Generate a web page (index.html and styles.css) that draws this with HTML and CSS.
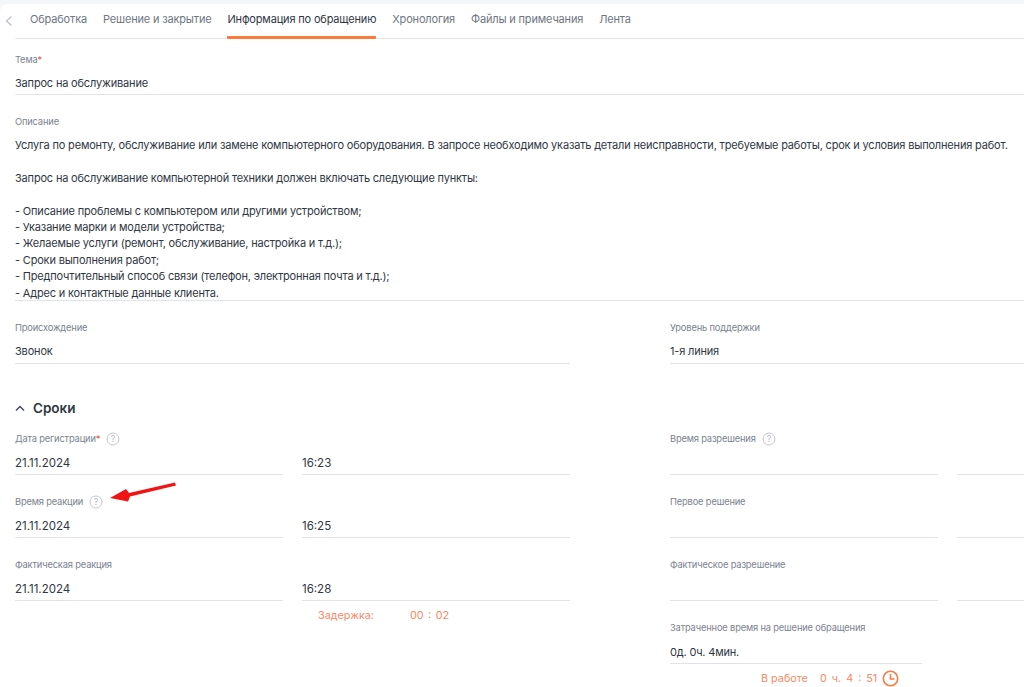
FILE: index.html
```html
<!DOCTYPE html>
<html lang="ru">
<head>
  <meta charset="UTF-8" />
  <meta name="viewport" content="width=device-width, initial-scale=1.0" />
  <title>Информация по обращению</title>
  <link rel="stylesheet" href="styles.css">
</head>
<body>
  <div class="card">
    <!-- вкладки -->
    <div class="tabs-row">
      <svg class="tabs-back" width="8" height="10" viewBox="0 0 8 10"><path d="M6.5 .5 L1.5 5 L6.5 9.5" fill="none" stroke="#c0c3ca" stroke-width="1.4"/></svg>
      <div class="tabs">
        <a class="tab">Обработка</a>
        <a class="tab">Решение и закрытие</a>
        <a class="tab active">Информация по обращению</a>
        <a class="tab">Хронология</a>
        <a class="tab">Файлы и примечания</a>
        <a class="tab">Лента</a>
      </div>
    </div>

    <div class="field field-topic">
      <div class="label">Тема<span class="req">*</span></div>
      <div class="value">Запрос на обслуживание</div>
    </div>

    <div class="field field-desc">
      <div class="label">Описание</div>
      <div class="value desc">
        <p>Услуга по ремонту, обслуживание или замене компьютерного оборудования. В запросе необходимо указать детали неисправности, требуемые работы, срок и условия выполнения работ.</p>
        <p>Запрос на обслуживание компьютерной техники должен включать следующие пункты:</p>
        <p>- Описание проблемы с компьютером или другими устройством;<br>
        - Указание марки и модели устройства;<br>
        - Желаемые услуги (ремонт, обслуживание, настройка и т.д.);<br>
        - Сроки выполнения работ;<br>
        - Предпочтительный способ связи (телефон, электронная почта и т.д.);<br>
        - Адрес и контактные данные клиента.</p>
      </div>
    </div>

    <div class="columns columns-origin">
      <div class="field">
        <div class="label">Происхождение</div>
        <div class="value">Звонок</div>
      </div>
      <div class="field">
        <div class="label">Уровень поддержки</div>
        <div class="value">1-я линия</div>
      </div>
    </div>

    <div class="section-title">
      <svg width="10" height="7" viewBox="0 0 10 7"><path d="M1 5.5 L5 1.5 L9 5.5" fill="none" stroke="#3d4654" stroke-width="1.4"/></svg>
      <span>Сроки</span>
    </div>

    <div class="columns columns-terms">
      <div class="col">
        <div class="field">
          <div class="label">Дата регистрации<span class="req">*</span>
            <svg class="hint" width="14" height="14" viewBox="0 0 14 14"><circle cx="7" cy="7" r="6" fill="none" stroke="#c3c6cc"/><text x="7" y="10" text-anchor="middle">?</text></svg>
          </div>
          <div class="pair"><div class="value num">21.11.2024</div><div class="value num">16:23</div></div>
        </div>
        <div class="field field-marked">
          <div class="label">Время реакции
            <svg class="hint" width="14" height="14" viewBox="0 0 14 14"><circle cx="7" cy="7" r="6" fill="none" stroke="#c3c6cc"/><text x="7" y="10" text-anchor="middle">?</text></svg>
          </div>
          <svg class="arrow" width="70" height="24" viewBox="0 0 70 24"><path d="M67 1.5 L21 12 L18 8 L2 17 L20 20.5 L22 15.5 L68 4.5 Z" fill="#f01414"/></svg>
          <div class="pair"><div class="value num">21.11.2024</div><div class="value num">16:25</div></div>
        </div>
        <div class="field">
          <div class="label">Фактическая реакция</div>
          <div class="pair"><div class="value num">21.11.2024</div><div class="value num">16:28</div></div>
        </div>
        <div class="delay"><span>Задержка:</span><span class="delay-time">00 : 02</span></div>
      </div>

      <div class="col">
        <div class="field">
          <div class="label">Время разрешения
            <svg class="hint" width="14" height="14" viewBox="0 0 14 14"><circle cx="7" cy="7" r="6" fill="none" stroke="#c3c6cc"/><text x="7" y="10" text-anchor="middle">?</text></svg>
          </div>
          <div class="pair"><div class="value">&nbsp;</div><div class="value">&nbsp;</div></div>
        </div>
        <div class="field">
          <div class="label">Первое решение</div>
          <div class="pair"><div class="value">&nbsp;</div><div class="value">&nbsp;</div></div>
        </div>
        <div class="field">
          <div class="label">Фактическое разрешение</div>
          <div class="pair"><div class="value">&nbsp;</div><div class="value">&nbsp;</div></div>
        </div>
        <div class="field field-spent">
          <div class="label">Затраченное время на решение обращения</div>
          <div class="value">0д. 0ч. 4мин.</div>
        </div>
        <div class="timer">
          <span>В работе</span><span class="timer-time">0 ч. 4 : 51</span>
          <svg width="17" height="17" viewBox="0 0 17 17"><circle cx="8.5" cy="8.5" r="7.2" fill="none" stroke="#f87c45" stroke-width="1.6"/><path d="M8.5 4 V9 H12.5" fill="none" stroke="#f87c45" stroke-width="1.6"/></svg>
        </div>
      </div>
    </div>
  </div>
</body>
</html>
```

FILE: styles.css
```css
body {
  margin: 0;
  background-color: #f5f6fa;
  font-family: Inter, "Noto Sans", sans-serif;
  color: #2f3744;
  overflow: hidden;
}
.card {
  margin-top: 4px;
  background-color: white;
  border-radius: 8px 0 0 0;
  padding-left: 15px;
  height: 683px;
  overflow: hidden;
}
.tabs-row {
  display: flex;
  align-items: flex-end;
  height: 34px;
  border-bottom: 1px solid #e4e5ec;
  position: relative;
}
.tabs-back {
  position: absolute;
  left: -10px;
  top: 12px;
}
.tabs {
  display: flex;
  gap: 16px;
  padding-left: 15px;
}
.tab {
  font-size: 11px;
  letter-spacing: -0.17px;
  line-height: 14px;
  color: #6e7683;
  padding-bottom: 10px;
  border-bottom: 3px solid transparent;
  margin-bottom: -1px;
  white-space: nowrap;
}
.tab.active {
  color: #2f3744;
  border-bottom-color: #fb7a3c;
  border-radius: 1px;
}
.label {
  display: flex;
  align-items: center;
  font-size: 9.3px;
  letter-spacing: -0.15px;
  line-height: 14px;
  height: 14px;
  color: #7a8290;
  white-space: nowrap;
}
.req {
  color: #ef5350;
}
.value {
  font-size: 11px;
  letter-spacing: -0.18px;
  line-height: 16px;
  color: #2f3744;
  padding: 8px 0 3px;
  border-bottom: 1px solid #e2e3e8;
  white-space: nowrap;
}
.value.num {
  font-size: 11.5px;
  letter-spacing: 0;
}
.field-topic {
  margin-top: 14px;
}
.field-desc {
  margin-top: 20px;
}
.desc {
  padding: 8px 0 0;
  height: 163px;
  line-height: 16.4px;
}
.desc p {
  margin: 0 0 16.4px;
}
.columns {
  display: grid;
  grid-template-columns: 555px 1fr;
  column-gap: 100px;
  width: 1108px;
}
.columns-origin {
  margin-top: 20px;
}
.columns-origin .value {
  padding-bottom: 4px;
}
.section-title {
  display: flex;
  align-items: center;
  gap: 8px;
  margin-top: 34px;
  height: 20px;
  font-size: 13.5px;
  font-weight: 600;
  color: #2f3744;
}
.columns-terms {
  margin-top: 14px;
}
.col .field {
  height: 63px;
}
.col .value {
  padding-top: 9px;
}
.pair {
  display: grid;
  grid-template-columns: 268px 268px;
  column-gap: 19px;
}
.hint {
  margin-left: 6px;
}
.hint text {
  font-family: Inter, sans-serif;
  font-size: 9px;
  letter-spacing: 0;
  fill: #b5b8bf;
}
.field-marked {
  position: relative;
}
.arrow {
  position: absolute;
  left: 93px;
  top: -14px;
}
.delay, .timer {
  display: flex;
  align-items: center;
  font-size: 10.8px;
  color: #f98a66;
  white-space: nowrap;
}
.delay {
  margin-top: -14px;
  padding-left: 303px;
  height: 16px;
}
.delay-time {
  margin-left: 36px;
  word-spacing: 1.5px;
}
.field-spent {
  width: 252px;
  height: auto !important;
}
.timer {
  margin-top: 5px;
  padding-left: 91px;
  height: 18px;
}
.timer-time {
  margin-left: 12px;
  margin-right: 5px;
  word-spacing: 2px;
}
```
